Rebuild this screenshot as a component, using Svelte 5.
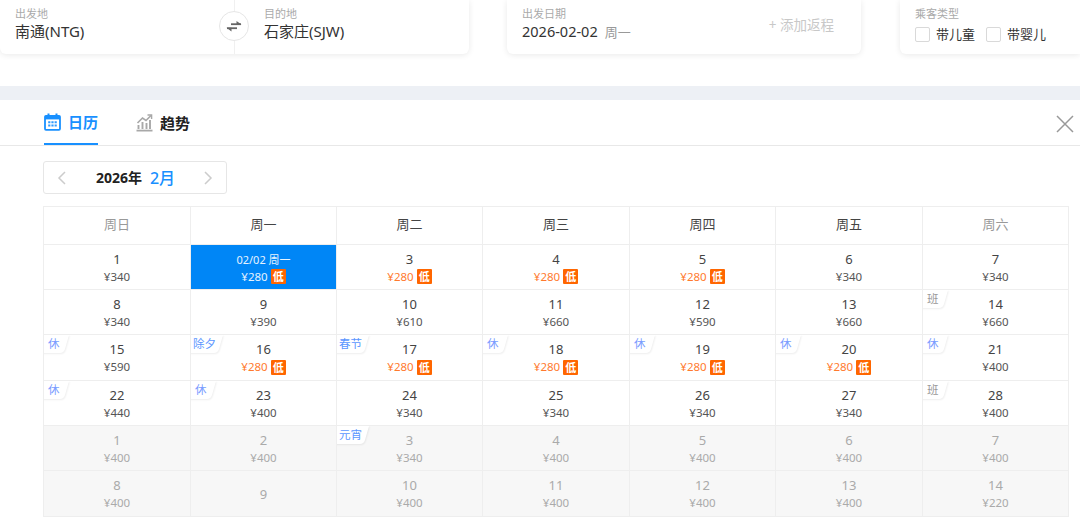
<script>
  const weekdays = ['周日', '周一', '周二', '周三', '周四', '周五', '周六'];
  const d = (day, price, extra = {}) => ({ day, price, ...extra });
  const low = { low: true };
  const cells = [
    d('1', 340), d('02/02 周一', 280, { low: true, selected: true }), d('3', 280, low), d('4', 280, low), d('5', 280, low), d('6', 340), d('7', 340),
    d('8', 340), d('9', 390), d('10', 610), d('11', 660), d('12', 590), d('13', 660), d('14', 660, { tag: '班', work: true }),
    d('15', 590, { tag: '休' }), d('16', 280, { low: true, tag: '除夕' }), d('17', 280, { low: true, tag: '春节' }), d('18', 280, { low: true, tag: '休' }), d('19', 280, { low: true, tag: '休' }), d('20', 280, { low: true, tag: '休' }), d('21', 400, { tag: '休' }),
    d('22', 440, { tag: '休' }), d('23', 400, { tag: '休' }), d('24', 340), d('25', 340), d('26', 340), d('27', 340), d('28', 400, { tag: '班', work: true }),
    d('1', 400, { off: true }), d('2', 400, { off: true }), d('3', 340, { off: true, tag: '元宵' }), d('4', 400, { off: true }), d('5', 400, { off: true }), d('6', 400, { off: true }), d('7', 400, { off: true }),
    d('8', 400, { off: true }), d('9', null, { off: true }), d('10', 400, { off: true }), d('11', 400, { off: true }), d('12', 400, { off: true }), d('13', 400, { off: true }), d('14', 220, { off: true })
  ];
</script>

<div class="page">
  <div class="search">
    <section class="card route">
      <div class="field">
        <span class="label">出发地</span>
        <span class="value">南通(NTG)</span>
      </div>
      <div class="field second">
        <span class="label">目的地</span>
        <span class="value">石家庄(SJW)</span>
      </div>
      <span class="swap">
        <svg width="16" height="12" viewBox="0 0 16 12" fill="#666" stroke="#666">
          <path d="M5 4.2H15" stroke-width="1.8" fill="none" />
          <path d="M10.5 1L15.5 4.6H10.5Z" stroke="none" />
          <path d="M11 8.2H1" stroke-width="1.8" fill="none" />
          <path d="M5.5 11.4L0.5 7.8H5.5Z" stroke="none" />
        </svg>
      </span>
    </section>
    <section class="card date">
      <div class="field">
        <span class="label">出发日期</span>
        <span class="value dateval">2026-02-02<em>周一</em></span>
      </div>
      <span class="return">+ 添加返程</span>
    </section>
    <section class="card passenger">
      <span class="label">乘客类型</span>
      <div class="checks">
        <label><i></i>带儿童</label>
        <label><i></i>带婴儿</label>
      </div>
    </section>
  </div>

  <div class="band"></div>

  <div class="panel">
    <header class="tabs">
      <div class="tab active">
        <svg width="17" height="18" viewBox="0 0 17 18" fill="none">
          <path d="M4.5 0.5V4M12.5 0.5V4" stroke="#1890ff" stroke-width="2" />
          <rect x="1" y="2.8" width="15" height="14" rx="1" stroke="#1890ff" stroke-width="1.8" />
          <rect x="1" y="2.8" width="15" height="3.6" fill="#1890ff" />
          <path d="M4.2 9.2h2.2M7.4 9.2h2.2M10.6 9.2h2.2M4.2 12.6h2.2M7.4 12.6h2.2M10.6 12.6h2.2" stroke="#2f9bff" stroke-width="2" />
        </svg>
        日历
      </div>
      <div class="tab">
        <svg width="17" height="18" viewBox="0 0 17 18" fill="none" stroke="#a8a8a8">
          <path d="M0.5 16.6H16.5" stroke-width="1.8" />
          <path d="M2.5 15V11M6.5 15V8M10.5 15V9M14 15V6" stroke-width="1.9" />
          <path d="M1.5 9L6.5 4L10 6.5L15 1.5" stroke-width="1.6" />
          <path d="M11.5 1H15.6V5" stroke-width="1.4" />
        </svg>
        趋势
      </div>
      <svg class="close" width="18" height="18" viewBox="0 0 18 18" stroke="#999" stroke-width="1.5">
        <path d="M1 1L17 17M17 1L1 17" />
      </svg>
    </header>

    <div class="month">
      <svg width="9" height="14" viewBox="0 0 9 14" fill="none" stroke="#ccc" stroke-width="1.5"><path d="M8 1L2 7L8 13" /></svg>
      <span class="month-text"><b>2026年</b><strong>2月</strong></span>
      <svg width="9" height="14" viewBox="0 0 9 14" fill="none" stroke="#ccc" stroke-width="1.5"><path d="M1 1L7 7L1 13" /></svg>
    </div>

    <div class="calendar">
      {#each weekdays as w, i}
        <div class="head" class:weekend={i === 0 || i === 6}>{w}</div>
      {/each}
      {#each cells as c}
        <div class="cell" class:off={c.off} class:selected={c.selected} class:low={c.low}>
          {#if c.tag}
            <span class="tag" class:work={c.work} class:wide={c.tag.length > 1}>{c.tag}</span>
          {/if}
          <span class="day">{c.day}</span>
          {#if c.price !== null}
            <span class="price">¥{c.price}{#if c.low}<u>低</u>{/if}</span>
          {/if}
        </div>
      {/each}
    </div>
  </div>
</div>

<style>
  :global(body) {
    margin: 0;
    background: #fff;
  }
  .page {
    width: 1080px;
    height: 523px;
    overflow: hidden;
    font-family: "Noto Sans", "Noto Sans CJK SC", sans-serif;
    color: #333;
  }
  .search {
    display: flex;
    height: 54px;
  }
  .card {
    background: #fff;
    border-radius: 0 0 6px 6px;
    box-shadow: 0 1px 6px rgba(0, 0, 0, 0.09);
    box-sizing: border-box;
    height: 54px;
  }
  .route {
    position: relative;
    display: flex;
    width: 469px;
  }
  .field {
    display: flex;
    flex-direction: column;
    padding: 7px 0 0 15px;
  }
  .route .field {
    width: 234px;
    box-sizing: border-box;
  }
  .route .second {
    width: 235px;
    border-left: 1px solid #f0f0f0;
    padding-left: 29px;
  }
  .label {
    display: block;
    font-size: 11px;
    line-height: 14px;
    color: #aaa;
  }
  .value {
    font-size: 15px;
    line-height: 20px;
    color: #333;
    white-space: nowrap;
  }
  .dateval {
    font-size: 14.5px;
  }
  .value em {
    font-style: normal;
    font-size: 13px;
    color: #999;
    margin-left: 7px;
  }
  .swap {
    position: absolute;
    left: 219px;
    top: 11px;
    width: 30px;
    height: 30px;
    box-sizing: border-box;
    border: 1px solid #e6e6e6;
    border-radius: 50%;
    background: #fff;
    display: flex;
    align-items: center;
    justify-content: center;
  }
  .date {
    width: 354px;
    margin-left: 38px;
    display: flex;
    justify-content: space-between;
    padding-right: 27px;
  }
  .return {
    font-size: 13.5px;
    color: #c8c8c8;
    line-height: 16px;
    margin-top: 17px;
  }
  .passenger {
    margin-left: 39px;
    flex: 1;
    padding: 7px 0 0 15px;
    border-radius: 0 0 0 6px;
  }
  .checks {
    display: flex;
    gap: 11px;
    margin-top: 4px;
  }
  .checks label {
    display: flex;
    align-items: center;
    gap: 6px;
    font-size: 13px;
    line-height: 18px;
    color: #333;
  }
  .checks i {
    width: 13px;
    height: 13px;
    border: 1px solid #d9d9d9;
    border-radius: 2px;
  }
  .band {
    height: 14px;
    margin-top: 32px;
    background: #edf0f5;
  }
  .panel {
    background: #fff;
  }
  .tabs {
    display: flex;
    align-items: flex-start;
    gap: 38px;
    height: 46px;
    box-sizing: border-box;
    border-bottom: 1px solid #e8e8e8;
    padding-left: 44px;
    position: relative;
  }
  .tab {
    display: flex;
    align-items: center;
    gap: 7px;
    height: 45px;
    box-sizing: border-box;
    font-size: 15px;
    font-weight: 700;
    color: #222;
  }
  .tab.active {
    color: #1890ff;
    border-bottom: 2px solid #1890ff;
    width: 54px;
    white-space: nowrap;
  }
  .close {
    position: absolute;
    left: 1056px;
    top: 15px;
  }
  .month {
    display: flex;
    align-items: center;
    justify-content: space-between;
    width: 184px;
    height: 33px;
    box-sizing: border-box;
    margin: 15px 0 0 43px;
    padding: 0 13px;
    border: 1px solid #e6e6e6;
    border-radius: 3px;
  }
  .month-text {
    display: flex;
    align-items: center;
    gap: 8px;
    padding-left: 1px;
    padding-bottom: 2px;
  }
  .month-text b {
    font-size: 14px;
    font-weight: 700;
    color: #222;
  }
  .month-text strong {
    font-size: 16px;
    font-weight: 500;
    color: #1890ff;
  }
  .calendar {
    display: grid;
    grid-template-columns: 147px 146px 146px 147px 146px 147px 146px;
    grid-template-rows: 38px 45px 45px 46px 45px 45px 46px;
    width: 1026px;
    box-sizing: border-box;
    margin: 12px 0 0 43px;
    border-top: 1px solid #eee;
    border-left: 1px solid #eee;
  }
  .head,
  .cell {
    border-right: 1px solid #eee;
    border-bottom: 1px solid #eee;
    box-sizing: border-box;
    text-align: center;
    position: relative;
    overflow: hidden;
  }
  .head {
    font-size: 13px;
    line-height: 35px;
    color: #444;
  }
  .head.weekend {
    color: #999;
  }
  .cell {
    display: flex;
    flex-direction: column;
    align-items: center;
    justify-content: center;
    padding-top: 1px;
    color: #555;
  }
  .day {
    font-size: 13px;
    line-height: 17px;
    color: #444;
  }
  .selected .day {
    font-size: 11px;
    color: #e6f3ff;
  }
  .off .day {
    color: #aaa;
  }
  .price {
    display: flex;
    align-items: center;
    font-size: 11.5px;
    line-height: 16px;
    height: 16px;
    margin-top: 1px;
  }
  .price u {
    text-decoration: none;
    display: block;
    width: 15px;
    height: 15px;
    margin-left: 3px;
    border-radius: 1px;
    background: #f60;
    color: #fff;
    font-size: 11px;
    font-weight: 700;
    line-height: 15px;
    text-align: center;
  }
  .low .price {
    color: #ff7a2e;
  }
  .selected {
    background: #0086f6;
  }
  .low.selected .price {
    color: #e6f3ff;
  }
  .off {
    background: #f7f7f7;
    color: #aaa;
  }
  .tag {
    position: absolute;
    left: 0;
    top: 0;
    z-index: 0;
    height: 18px;
    padding: 0 4px;
    font-size: 11.5px;
    line-height: 18px;
    color: #7a9cff;
    white-space: nowrap;
  }
  .tag::before {
    content: "";
    position: absolute;
    z-index: -1;
    left: -6px;
    right: -5px;
    top: 0;
    bottom: 0;
    background: #fff;
    border-radius: 0 0 4px 0;
    box-shadow: 1px 1px 2px rgba(0, 0, 0, 0.07);
    transform: skewX(-16deg);
    transform-origin: top left;
  }
  .tag.wide {
    padding: 0 2px;
    color: #5b96ff;
  }
  .tag.work {
    color: #999;
  }
</style>
